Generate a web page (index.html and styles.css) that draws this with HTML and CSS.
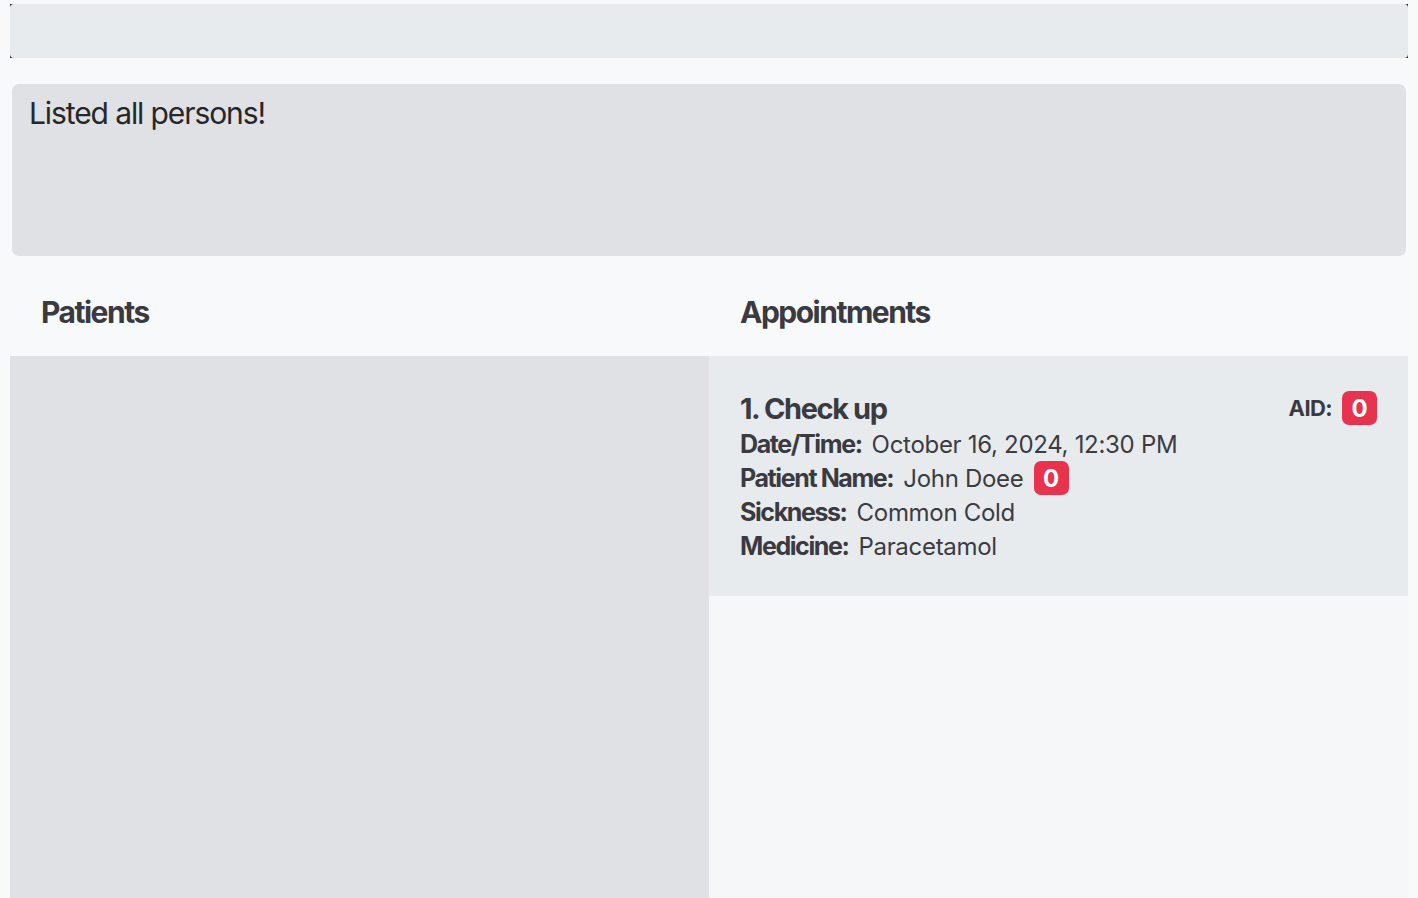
FILE: index.html
```html
<!DOCTYPE html>
<html>
<head>
<meta charset="utf-8">
<link rel="stylesheet" href="styles.css">
</head>
<body>
<div class="app">
  <div class="cmd-wrap"><div class="cmd"></div></div>
  <div class="result">Listed all persons!</div>
  <div class="lists">
    <div class="col">
      <div class="col-title">Patients</div>
      <div class="panel panel-left"></div>
    </div>
    <div class="col">
      <div class="col-title">Appointments</div>
      <div class="panel panel-right">
        <div class="card">
          <div class="card-head">
            <div class="card-title">1. Check up</div>
            <div class="aid"><span class="aid-label">AID:</span><span class="badge">0</span></div>
          </div>
          <div class="row"><span class="lbl">Date/Time:</span><span class="val">October 16, 2024, 12:30 PM</span></div>
          <div class="row"><span class="lbl">Patient Name:</span><span class="val">John Doee</span><span class="badge">0</span></div>
          <div class="row"><span class="lbl">Sickness:</span><span class="val">Common Cold</span></div>
          <div class="row"><span class="lbl">Medicine:</span><span class="val">Paracetamol</span></div>
        </div>
      </div>
    </div>
  </div>
</div>
</body>
</html>
```
FILE: styles.css
```css
html, body {
  margin: 0;
  padding: 0;
  height: 100%;
  overflow: hidden;
}
body {
  background: #f8f9fb;
  font-family: Inter, "Noto Sans", sans-serif;
  color: #2f3035;
}
.app {
  padding: 4px 10px 0 10px;
  display: flex;
  flex-direction: column;
  height: 894px;
}
.cmd-wrap {
  height: 54px;
  background: #2b2b2b;
}
.cmd {
  height: 100%;
  background: #e8ebee;
  border-radius: 4px;
}
.result {
  margin: 26px 2px 0 2px;
  height: 172px;
  box-sizing: border-box;
  background: #dfe1e5;
  border-radius: 7px;
  padding: 10px 17px;
  font-size: 30px;
  letter-spacing: -1.1px;
  line-height: 38px;
  color: #25272b;
}
.lists {
  flex: 1;
  display: flex;
  min-height: 0;
}
.col {
  flex: 1;
  display: flex;
  flex-direction: column;
}
.col-title {
  height: 100px;
  box-sizing: border-box;
  padding: 36px 0 0 31px;
  font-size: 30px;
  font-weight: 700;
  letter-spacing: -1.5px;
  color: #3a3a40;
  line-height: 40px;
}
.panel {
  flex: 1;
}
.panel-left {
  background: #dfe1e5;
}
.panel-right {
  background: #f6f7f9;
}
.card {
  background: #e8ebee;
  height: 240px;
  box-sizing: border-box;
  padding: 33px 31px 0 31px;
}
.card-head {
  display: flex;
  justify-content: space-between;
  align-items: center;
  height: 38px;
}
.card-title {
  font-size: 29px;
  font-weight: 700;
  letter-spacing: -1.4px;
  color: #3a3a40;
}
.aid {
  display: flex;
  align-items: center;
  gap: 10px;
}
.aid-label {
  font-size: 22px;
  font-weight: 700;
  letter-spacing: -0.6px;
  color: #3a3a40;
}
.badge {
  display: inline-flex;
  align-items: center;
  justify-content: center;
  width: 35px;
  height: 34px;
  background: #e8334f;
  color: #fff;
  border-radius: 7px;
  font-size: 24px;
  font-weight: 700;
}
.row {
  display: flex;
  align-items: center;
  height: 34px;
  font-size: 25px;
}
.lbl {
  font-weight: 700;
  letter-spacing: -1.4px;
  color: #3a3a40;
  margin-right: 10px;
}
.val {
  color: #3a3c42;
  font-size: 24px;
  letter-spacing: -0.3px;
  margin-right: 10px;
}
```
